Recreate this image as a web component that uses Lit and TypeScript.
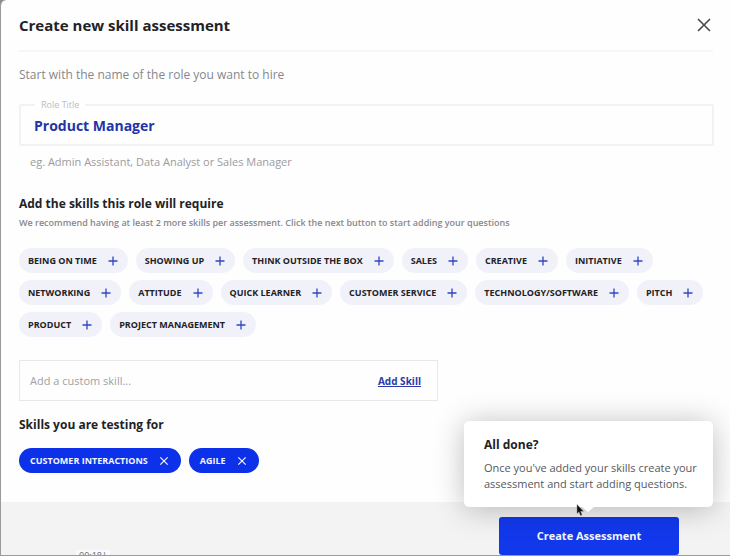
import { LitElement, html, css } from "lit";
import { customElement, property, state } from "lit/decorators.js";

@customElement("skill-chip")
class SkillChip extends LitElement {
  @property() label = "";
  @property({ type: Boolean }) selected = false;

  static styles = css`
    :host {
      display: block;
    }
    .chip {
      display: flex;
      align-items: center;
      gap: 11px;
      height: 25px;
      padding: 0 10px 0 9px;
      border: 0;
      border-radius: 13px;
      background: #f1f1f9;
      color: #222226;
      font: 700 9px/14px "Open Sans", sans-serif;
      text-transform: uppercase;
      white-space: nowrap;
      cursor: pointer;
    }
    .chip.selected {
      padding: 0 12px 0 11px;
      background: #0c31e8;
      color: #f4f6ff;
    }
    .icon {
      width: 10px;
      height: 10px;
      fill: none;
      stroke: #3346c4;
      stroke-width: 1.3;
    }
    .selected .icon {
      stroke: #f4f6ff;
      stroke-width: 1.2;
    }
  `;

  render() {
    return html`<button class="chip ${this.selected ? "selected" : ""}" type="button">
      <span>${this.label}</span>
      <svg class="icon" viewBox="0 0 10 10" aria-hidden="true">
        <path d=${this.selected ? "M1.3 1.3 8.7 8.7M8.7 1.3 1.3 8.7" : "M5 .5V9.5M.5 5H9.5"} />
      </svg>
    </button>`;
  }
}

@customElement("app-root")
class AppRoot extends LitElement {
  @state() suggestions = [
    "Being on time", "Showing up", "Think outside the box", "Sales", "Creative", "Initiative",
    "Networking", "Attitude", "Quick learner", "Customer service", "Technology/software", "Pitch",
    "Product", "Project management",
  ];
  @state() chosen = ["Customer interactions", "Agile"];

  static styles = css`
    :host {
      display: block;
      background: #8e8e8e;
      font-family: "Open Sans", sans-serif;
      color: #222226;
    }
    * {
      box-sizing: border-box;
    }
    .dialog {
      display: flex;
      flex-direction: column;
      min-height: 100vh;
      border: solid #9a9a9a;
      border-width: 0 0 1px 1px;
      border-top-left-radius: 6px;
      background: #fefefe;
      overflow: hidden;
    }
    .head {
      display: flex;
      align-items: center;
      justify-content: space-between;
      height: 52px;
      margin: 0 17px 0 18px;
      border-bottom: 2px solid #f6f6f6;
    }
    h1, h2, h3, p {
      margin: 0;
    }
    h1 {
      font-size: 15px;
      line-height: 24px;
      font-weight: 700;
    }
    .close {
      display: flex;
      padding: 2px;
      border: 0;
      background: none;
      cursor: pointer;
    }
    .close svg {
      width: 14px;
      height: 14px;
      fill: none;
      stroke: #48484c;
      stroke-width: 1.6;
    }
    .body {
      flex: 1;
      padding: 14px 16px 29px 18px;
    }
    .intro {
      font-size: 12px;
      line-height: 18px;
      color: #87878a;
    }
    .field {
      position: relative;
      margin-top: 20px;
    }
    .field label {
      position: absolute;
      top: -5px;
      left: 16px;
      padding: 0 6px;
      background: #fefefe;
      font-size: 9px;
      line-height: 12px;
      color: #bdbdc0;
    }
    .role {
      display: block;
      width: 100%;
      height: 42px;
      padding: 0 13px;
      border: 2px solid #f2f2f2;
      border-radius: 2px;
      background: transparent;
      font: 700 14px/20px "Open Sans", sans-serif;
      color: #2334a6;
    }
    .hint {
      margin: 8px 0 0 11px;
      font-size: 11px;
      line-height: 16px;
      color: #9b9b9e;
    }
    h2 {
      font-size: 12px;
      line-height: 18px;
      font-weight: 700;
    }
    .require {
      margin-top: 25px;
    }
    .note {
      margin-top: 3px;
      font-size: 9px;
      line-height: 14px;
      font-weight: 600;
      color: #88888b;
    }
    .chips {
      display: flex;
      flex-wrap: wrap;
      gap: 7px 8px;
      margin-top: 18px;
    }
    .custom {
      display: flex;
      align-items: center;
      max-width: 419px;
      height: 41px;
      margin-top: 23px;
      padding: 0 16px 0 10px;
      border: 1px solid #e8e8e8;
    }
    .custom input {
      flex: 1;
      min-width: 0;
      padding: 0;
      border: 0;
      background: none;
      font: 400 11px/16px "Open Sans", sans-serif;
    }
    .custom input::placeholder {
      color: #a0a0a3;
      opacity: 1;
    }
    .custom a {
      font-size: 10px;
      line-height: 14px;
      font-weight: 700;
      color: #2b3ca8;
    }
    .testing {
      margin-top: 15px;
    }
    .chips.chosen {
      margin-top: 14px;
    }
    .foot {
      position: relative;
      display: flex;
      justify-content: flex-end;
      align-items: flex-end;
      height: 53px;
      padding-right: 51px;
      background: #f3f3f3;
    }
    .action {
      position: relative;
    }
    .create {
      display: block;
      width: 180px;
      height: 38px;
      border: 0;
      border-radius: 3px;
      background: #1238ec;
      color: #f4f6ff;
      font: 700 11px/16px "Open Sans", sans-serif;
      cursor: pointer;
    }
    .tip {
      position: absolute;
      right: -34px;
      bottom: 48px;
      width: 249px;
      padding: 15px 12px 15px 20px;
      border-radius: 5px;
      background: #fff;
      box-shadow: 0 2px 30px rgba(0, 0, 0, 0.26);
    }
    .tip::after {
      content: "";
      position: absolute;
      top: 100%;
      left: 118px;
      border: solid transparent;
      border-width: 5px 6px 0;
      border-top-color: #fff;
    }
    .tip h3 {
      font-size: 12px;
      line-height: 18px;
    }
    .tip p {
      margin-top: 6px;
      font-size: 11px;
      line-height: 16px;
      color: #58585c;
    }
    .pointer {
      position: absolute;
      z-index: 1;
      left: 112px;
      bottom: -9px;
      width: 8px;
      height: 12px;
    }
    .time {
      position: absolute;
      left: 75px;
      bottom: -7px;
      padding: 0 3px;
      background: #fafafa;
      font-size: 9px;
      line-height: 12px;
      color: #666;
    }
  `;

  render() {
    return html`<main class="dialog">
      <header class="head">
        <h1>Create new skill assessment</h1>
        <button class="close" type="button" aria-label="Close">
          <svg viewBox="0 0 14 14"><path d="M1 1 13 13M13 1 1 13" /></svg>
        </button>
      </header>
      <section class="body">
        <p class="intro">Start with the name of the role you want to hire</p>
        <div class="field">
          <input class="role" id="role" type="text" value="Product Manager" />
          <label for="role">Role Title</label>
        </div>
        <p class="hint">eg. Admin Assistant, Data Analyst or Sales Manager</p>
        <h2 class="require">Add the skills this role will require</h2>
        <p class="note">We recommend having at least 2 more skills per assessment. Click the next button to start adding your questions</p>
        <div class="chips">
          ${this.suggestions.map((s) => html`<skill-chip label=${s}></skill-chip>`)}
        </div>
        <div class="custom">
          <input type="text" aria-label="Custom skill" placeholder="Add a custom skill..." />
          <a href="#add">Add Skill</a>
        </div>
        <h2 class="testing">Skills you are testing for</h2>
        <div class="chips chosen">
          ${this.chosen.map((s) => html`<skill-chip selected label=${s}></skill-chip>`)}
        </div>
      </section>
      <footer class="foot">
        <span class="time">00:18|</span>
        <div class="action">
          <div class="tip" role="status">
            <h3>All done?</h3>
            <p>Once you've added your skills create your assessment and start adding questions.</p>
            <svg class="pointer" viewBox="0 0 8 12" aria-hidden="true">
              <path d="M1 .5V9.5L3 7.8 4.5 11.5 6 10.9 4.6 7.3H7.5Z" fill="#111" stroke="#888" stroke-width=".4" />
            </svg>
          </div>
          <button class="create" type="button">Create Assessment</button>
        </div>
      </footer>
    </main>`;
  }
}
